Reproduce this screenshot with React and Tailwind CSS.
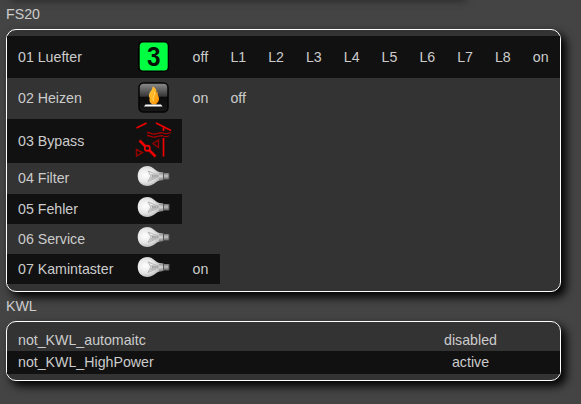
import React from "react";

const BulbIcon = () => (
  <svg width="33" height="22" viewBox="0 0 33 22" className="-mt-1">
    <defs>
      <radialGradient id="glass" cx="0.3" cy="0.45" r="0.7">
        <stop offset="0" stopColor="#ffffff" />
        <stop offset="0.5" stopColor="#e6e6e6" />
        <stop offset="1" stopColor="#a4a4a4" />
      </radialGradient>
      <linearGradient id="socket" x1="0" y1="0" x2="0" y2="1">
        <stop offset="0" stopColor="#8a8a8a" />
        <stop offset="0.45" stopColor="#e4e4e4" />
        <stop offset="1" stopColor="#707070" />
      </linearGradient>
    </defs>
    <path
      d="M10.500 1C4.500 1 .7 5.300 .7 11s3.800 10 9.800 10c5.500 0 8-4.500 12-5.500l4-.5V7.500l-4-.5C18.500 6 16 1 10.500 1z"
      fill="url(#glass)"
    />
    <path
      d="M11 6l3 5-3 5.500 9-4M11 6l10 4"
      fill="none"
      stroke="#b4b4b4"
      strokeWidth="1"
    />
    <path d="M13.500 9l9 1v2l-10 3 2.500-4z" fill="#b8b8b8" />
    <path d="M15 11h6" stroke="#8f8f8f" strokeDasharray="1.500 1" />
    <path d="M22 8h4v7h-4z" fill="url(#socket)" opacity="0.7" />
    <path d="M27 8h5v6.500h-5z" fill="url(#socket)" opacity="0.8" />
    <path d="M26.500 8v7M32 8v6" stroke="#555555" />
  </svg>
);

const LevelIcon = () => (
  <svg width="31" height="31" viewBox="0 0 31 31" className="-mt-0.5">
    <rect x="0" y="0" width="31" height="31" rx="5" fill="#000000" />
    <rect x="1.700" y="1.500" width="28" height="28" rx="3.500" fill="#00ff40" />
    <text
      x="9"
      y="24.500"
      textLength="13.500"
      lengthAdjust="spacingAndGlyphs"
      fontFamily="Liberation Sans, sans-serif"
      fontWeight="bold"
      fontSize="27"
      fill="#061006"
    >
      3
    </text>
  </svg>
);

const FlameIcon = () => (
  <svg width="31" height="31" viewBox="0 0 31 31" className="-mt-px">
    <defs>
      <linearGradient id="gloss" x1="0" y1="0" x2="0" y2="1">
        <stop offset="0" stopColor="#8e8e8e" />
        <stop offset="0.45" stopColor="#383838" />
        <stop offset="0.5" stopColor="#0c0c0c" />
        <stop offset="1" stopColor="#181818" />
      </linearGradient>
      <linearGradient id="flame" x1="0" y1="0" x2="1" y2="1">
        <stop offset="0" stopColor="#ffd040" />
        <stop offset="0.5" stopColor="#ffae20" />
        <stop offset="1" stopColor="#ff8a00" />
      </linearGradient>
    </defs>
    <rect
      x="1"
      y="1"
      width="29"
      height="29"
      rx="4.500"
      fill="url(#gloss)"
      stroke="#050505"
      strokeWidth="1.500"
    />
    <path
      d="M14.500 4.500c.5 3.500-3.500 5.500-3.500 9 0 2 1 2.500.5 4.500-.3 2 1.500 3.500 3.500 4.500h2.500c2-1.500 4-3.500 3.500-6.500-.3-2-2-3-1-6-1 .3-1 1-1.500 1.500C19 8.500 17.500 5.500 14.500 4.500z"
      fill="url(#flame)"
    />
    <path d="M16.500 10c1 3.500-3 5-1 9" fill="none" stroke="#ffe36a" />
    <path d="M7.500 22.500h15.500l1.500 2H6z" fill="#ffffff" />
  </svg>
);

const BypassIcon = () => (
  <svg
    width="37"
    height="38"
    viewBox="0 0 37 38"
    fill="none"
    stroke="#f00000"
    strokeWidth="1.700"
  >
    <path d="M1.500 6L11.500 1M21 1L36 8.500M28.500 5v4" />
    <path d="M28.500 16v18.500" />
    <path
      d="M12 10.500c4 0 4 2 8 1.500s5-2 8-1 5 1 8-.5M12 13.500c4 0 4 2 8 1.500s5-2 8-1 5 1 6-.5"
      stroke="#a80000"
      strokeWidth="1.300"
    />
    <path d="M4.500 18.500l6 6M14 28l6.500 6.500" strokeWidth="2.500" />
    <circle cx="12.300" cy="26.300" r="2.600" />
    <path
      d="M23.500 18v7.500L18 21.500zM1.500 27.500v6.500l6-3.500z"
      stroke="#980000"
      strokeWidth="1.400"
    />
  </svg>
);

const devices = [
  {
    name: "01 Luefter",
    icon: <LevelIcon />,
    height: "h-[42px]",
    commands: ["off", "L1", "L2", "L3", "L4", "L5", "L6", "L7", "L8", "on"],
  },
  {
    name: "02 Heizen",
    icon: <FlameIcon />,
    height: "h-[41px] pb-px",
    commands: ["on", "off"],
  },
  { name: "03 Bypass", icon: <BypassIcon />, height: "h-11", commands: [] },
  {
    name: "04 Filter",
    icon: <BulbIcon />,
    height: "h-[31px] pb-px",
    commands: [],
  },
  { name: "05 Fehler", icon: <BulbIcon />, height: "h-[30px]", commands: [] },
  { name: "06 Service", icon: <BulbIcon />, height: "h-[30px]", commands: [] },
  {
    name: "07 Kamintaster",
    icon: <BulbIcon />,
    height: "h-[30px]",
    commands: ["on"],
  },
];

const notifies = [
  { name: "not_KWL_automaitc", state: "disabled" },
  { name: "not_KWL_HighPower", state: "active" },
];

const Panel = ({ children }) => (
  <div className="w-[555px] rounded-[10px] border border-white bg-[#333333] py-1.5 shadow-[5px_5px_10px_#000000]">
    {children}
  </div>
);

const App = () => {
  return (
    <div className="h-[404px] w-[581px] overflow-hidden bg-[#444444] px-1.5 font-['Liberation_Sans',Arial,sans-serif] text-[14.200px] leading-4 text-[#cccccc]">
      {/* lower shadow of the panel above */}
      <div className="-mt-2.5 h-2.5 w-[455px] shadow-[5px_0_8px_#222222]" />
      <div className="flex h-[29px] items-center pb-0.5">FS20</div>
      <Panel>
        {devices.map((device, i) => (
          <div
            key={device.name}
            className={`flex w-fit items-center ${device.height} ${
              i % 2 === 0 ? "bg-[#111111]" : ""
            }`}
          >
            <div className="w-[118px] pl-[11px]">{device.name}</div>
            <div className="flex w-[57px] justify-center">{device.icon}</div>
            {device.commands.map((command) => (
              <div key={command} className="w-[37.800px] pl-[10.600px]">
                {command}
              </div>
            ))}
          </div>
        ))}
        <div className="h-px" />
      </Panel>
      <div className="flex h-[29px] items-center pb-0.5">KWL</div>
      <Panel>
        {notifies.map((notify, i) => (
          <div
            key={notify.name}
            className={`flex h-[23px] items-center ${
              i % 2 === 1 ? "bg-[#111111] pb-0.5" : ""
            }`}
          >
            <div className="w-[373px] pl-[11px]">{notify.name}</div>
            <div className="flex-1 pl-px text-center">{notify.state}</div>
          </div>
        ))}
      </Panel>
    </div>
  );
};

export default App;
